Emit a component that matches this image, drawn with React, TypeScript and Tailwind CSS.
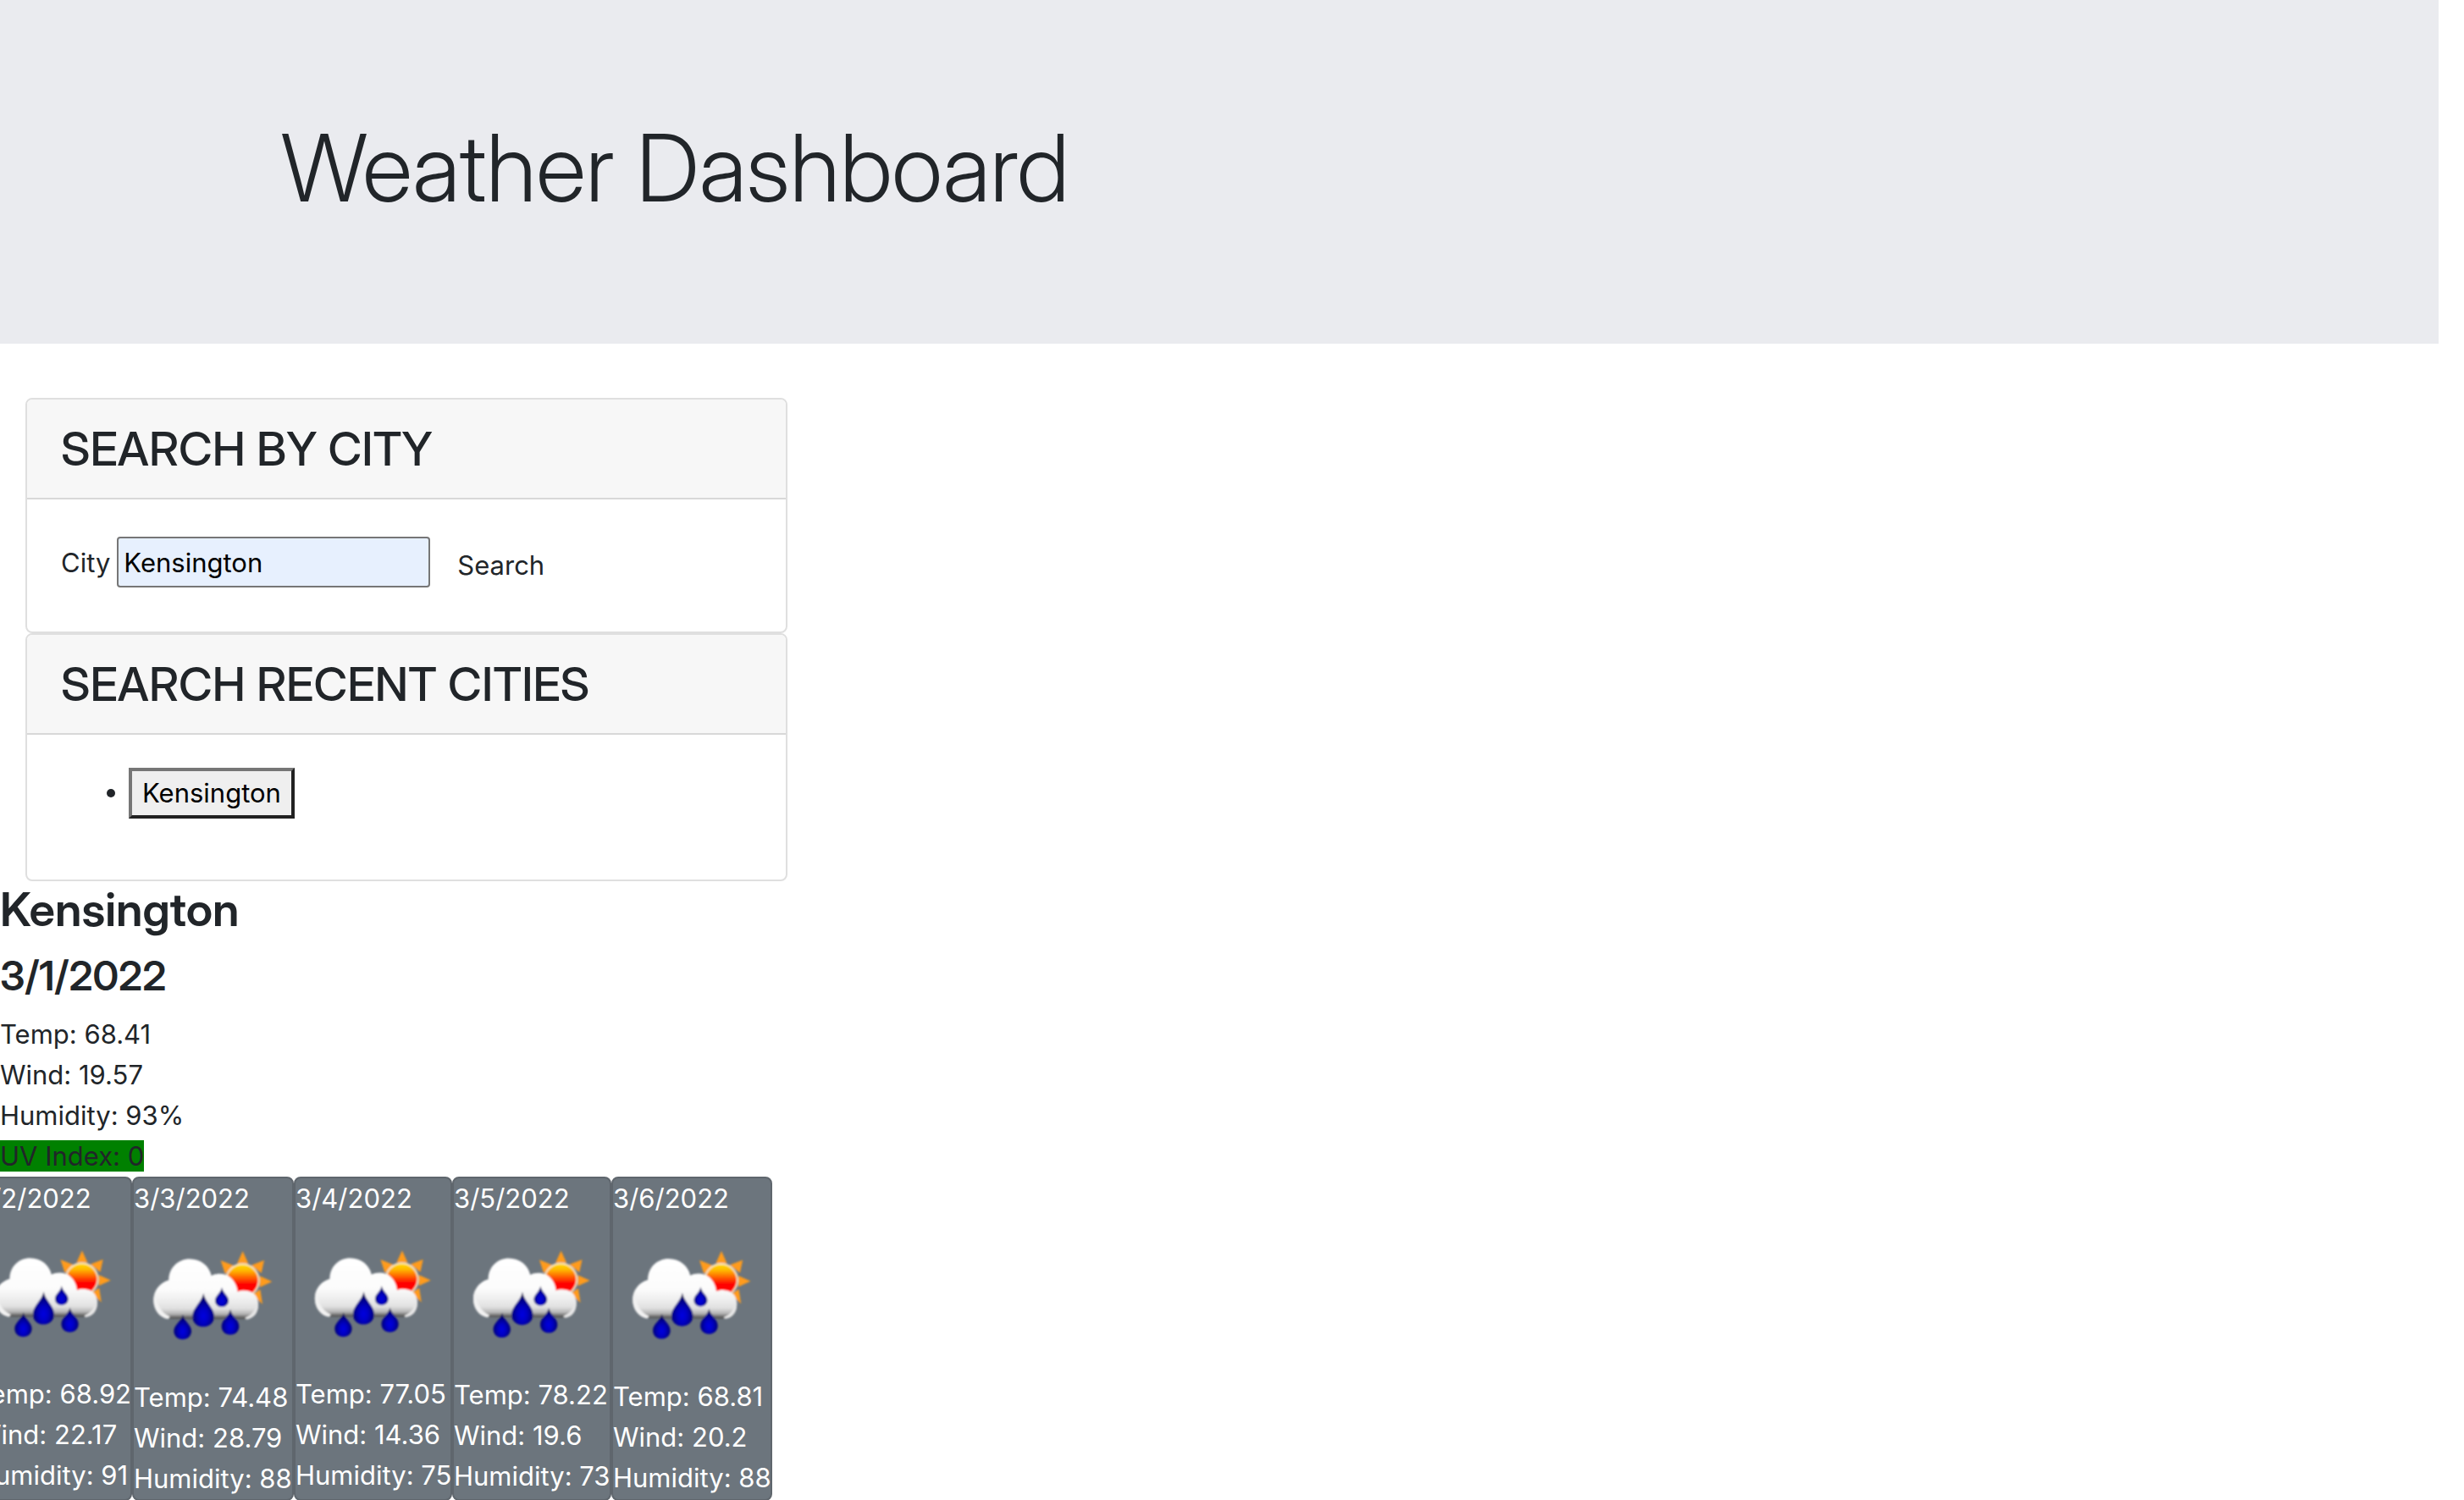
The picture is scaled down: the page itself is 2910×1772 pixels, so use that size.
import React, { useState } from "react";

type Day = { date: string; temp: string; wind: string; humidity: string };

const forecast: Day[] = [
  { date: "3/2/2022", temp: "68.92", wind: "22.17", humidity: "91" },
  { date: "3/3/2022", temp: "74.48", wind: "28.79", humidity: "88" },
  { date: "3/4/2022", temp: "77.05", wind: "14.36", humidity: "75" },
  { date: "3/5/2022", temp: "78.22", wind: "19.6", humidity: "73" },
  { date: "3/6/2022", temp: "68.81", wind: "20.2", humidity: "88" },
];

function RainIcon({ id }: { id: string }) {
  const sun = `sun-${id}`;
  const cloud = `cloud-${id}`;
  const drop = `drop-${id}`;
  const soft = `soft-${id}`;
  return (
    <svg viewBox="-6 -60 561 561" className="block aspect-square w-full" role="img" aria-label="Rain">
      <defs>
        <linearGradient id={sun} x1="0" y1="0" x2="0" y2="1">
          <stop offset="0" stopColor="#ffe000" />
          <stop offset="0.2" stopColor="#ffb800" />
          <stop offset="0.5" stopColor="#ff3c00" />
          <stop offset="0.62" stopColor="#ff0000" />
          <stop offset="1" stopColor="#ff0000" />
        </linearGradient>
        <linearGradient id={cloud} x1="0" y1="82" x2="0" y2="296" gradientUnits="userSpaceOnUse">
          <stop offset="0" stopColor="#ffffff" />
          <stop offset="0.5" stopColor="#fcfcfc" />
          <stop offset="0.66" stopColor="#f0f0f0" />
          <stop offset="0.82" stopColor="#e0e0e0" />
          <stop offset="0.91" stopColor="#b4b4b4" />
          <stop offset="0.97" stopColor="#606060" />
          <stop offset="1" stopColor="#4c4c4c" />
        </linearGradient>
        <radialGradient id={drop} cx="0.5" cy="0.68" r="0.62">
          <stop offset="0" stopColor="#0000e0" />
          <stop offset="0.35" stopColor="#0000c4" />
          <stop offset="0.7" stopColor="#000088" />
          <stop offset="1" stopColor="#000040" />
        </radialGradient>
        <filter id={soft} x="-5%" y="-5%" width="110%" height="110%">
          <feGaussianBlur stdDeviation="3" />
        </filter>
      </defs>
      <g filter={`url(#${soft})`}>
        <g fill="#ff9b1c">
          <path d="M380 54 L400 98 L360 98 Z" />
          <path d="M456 86 L446 132 L410 104 Z" />
          <path d="M484 162 L440 182 L440 142 Z" />
          <path d="M450 242 L414 208 L442 190 Z" />
          <path d="M302 87 L350 106 L318 136 Z" />
        </g>
        <circle cx="379" cy="158" r="58" fill={`url(#${sun})`} stroke="#f8e4c0" strokeWidth="6" />
        <path
          d="M116 294 C86 290 64 262 64 228 C64 194 86 166 118 157 C118 114 150 82 192 82 C232 82 262 108 269 141 C290 131 320 132 338 149 C353 163 360 180 362 198 C376 191 400 192 415 202 C432 212 438 236 434 256 C430 279 415 293 393 295 Z"
          fill={`url(#${cloud})`}
        />
        <path d="M116 295 C86 291 64 262 64 228 C64 215 67 204 72 194 C72 238 88 272 122 286 Z" fill="#f2f2f2" />
        <path d="M393 296 C415 294 430 279 434 256 C434 248 436 240 434 230 C424 262 414 280 388 290 Z" fill="#e6e6e6" />
        <g fill={`url(#${drop})`}>
          <path d="M241 203 C246 235 279 254 279 284 C279 307 262 322 240 322 C218 322 202 307 202 284 C202 254 235 235 241 203 Z" />
          <path d="M306 182 C309 202 330 212 330 229 C330 243 320 252 306 252 C292 252 282 243 282 229 C282 212 303 202 306 182 Z" />
          <path d="M168 278 C171 302 198 314 198 337 C198 355 185 367 167 367 C149 367 136 355 136 337 C136 314 164 302 168 278 Z" />
          <path d="M336 260 C340 284 367 297 367 320 C367 338 354 350 336 350 C318 350 305 338 305 320 C305 297 332 284 336 260 Z" />
        </g>
      </g>
    </svg>
  );
}

function Panel({ title, children }: { title: string; children: React.ReactNode }) {
  return (
    <section className="overflow-hidden rounded-lg border-2 border-[#dfdfdf] bg-white">
      <h2 className="border-b-2 border-[#d8d8d8] bg-[#f7f7f7] px-10 py-6 font-['Inter_Display','Inter',sans-serif] text-[55px] leading-[68px] font-medium">
        {title}
      </h2>
      {children}
    </section>
  );
}

export default function App() {
  const [city, setCity] = useState("Kensington");
  return (
    <div className="overflow-x-clip bg-white font-['Inter',sans-serif] text-[31px] leading-[48px] text-[#212529]">
      <header className="mr-[30px] bg-[#eaebef] px-[332px] pt-[130px] pb-[140px]">
        <h1 className="font-['Inter_Display','Inter',sans-serif] text-[110px] leading-[136px] font-light">
          Weather Dashboard
        </h1>
      </header>

      <div className="mt-16 ml-[30px] w-[900px]">
        <Panel title="SEARCH BY CITY">
          <form className="flex h-[156px] items-start px-10 pt-11" onSubmit={(e) => e.preventDefault()}>
            <label htmlFor="city" className="mr-2 pt-[7px]">
              City
            </label>
            <input
              id="city"
              type="text"
              value={city}
              onChange={(e) => setCity(e.target.value)}
              className="h-[60px] w-[370px] rounded border-2 border-[#767676] bg-[#e7f0fe] px-1.5 text-black"
            />
            <button type="submit" className="ml-8 pt-2.5">
              Search
            </button>
          </form>
        </Panel>
        <Panel title="SEARCH RECENT CITIES">
          <ul className="flex h-[171px] list-none flex-col px-10 pt-[39px]">
            <li className="flex items-center gap-4 pl-[54px]">
              <span className="size-2.5 rounded-full bg-[#212529]" />
              <button
                type="button"
                className="border-4 border-t-[#767676] border-r-[#212121] border-b-[#212121] border-l-[#767676] bg-[#efefef] px-3 py-0.5 text-black"
              >
                Kensington
              </button>
            </li>
          </ul>
        </Panel>
      </div>

      <section>
        <h2 className="mb-4 font-['Inter_Display','Inter',sans-serif] text-[55px] leading-[67px] font-semibold">Kensington</h2>
        <h3 className="mb-4 font-['Inter_Display','Inter',sans-serif] text-[48px] leading-[58px] font-semibold">3/1/2022</h3>
        <p>Temp: 68.41</p>
        <p>Wind: 19.57</p>
        <p>Humidity: 93%</p>
        <p>
          <span className="bg-[#008000]">UV Index: 0</span>
        </p>
      </section>

      <div className="-ml-[31px] grid grid-cols-[187px_191px_187px_188px_190px] text-white">
        {forecast.map((d, i) => (
          <article key={d.date} className="rounded-lg border-2 border-[#5f666d] bg-[#6c757d] whitespace-nowrap">
            <p>{d.date}</p>
            <RainIcon id={String(i)} />
            <p>Temp: {d.temp}</p>
            <p>Wind: {d.wind}</p>
            <p>Humidity: {d.humidity}</p>
          </article>
        ))}
      </div>
    </div>
  );
}
